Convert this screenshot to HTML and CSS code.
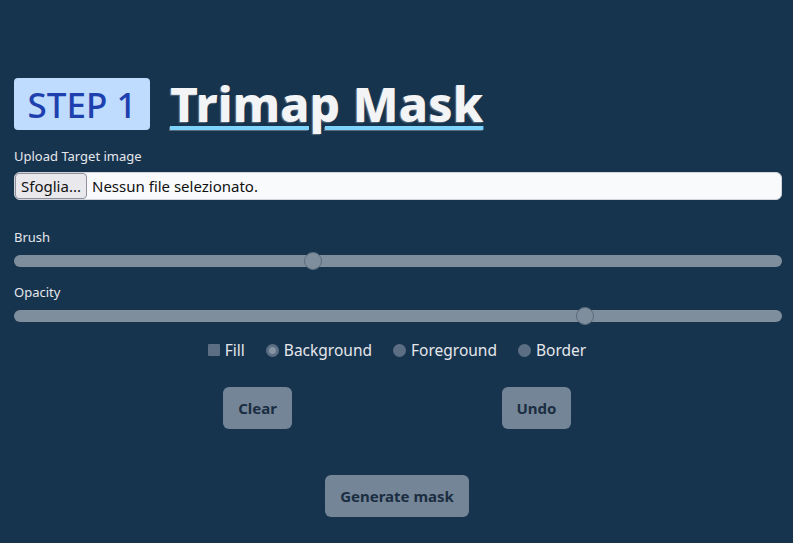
FILE: index.html
```html
<!DOCTYPE html>
<html lang="it">
<head>
<meta charset="utf-8">
<title>Trimap Mask</title>
<link rel="stylesheet" href="styles.css">
</head>
<body>
<main class="page">
  <header class="head">
    <span class="badge">STEP 1</span>
    <h1 class="title">Trimap Mask</h1>
  </header>

  <label class="label label-upload">Upload Target image</label>
  <div class="file">
    <span class="file-btn">Sfoglia...</span>
    <span class="file-text">Nessun file selezionato.</span>
  </div>

  <label class="label label-brush">Brush</label>
  <input class="range" type="range" min="0" max="100" step="any" value="38.7">

  <label class="label label-opacity">Opacity</label>
  <input class="range" type="range" min="0" max="100" step="any" value="74.9">

  <div class="options">
    <label class="opt"><span class="box"></span>Fill</label>
    <label class="opt"><span class="dot dot-on"></span>Background</label>
    <label class="opt"><span class="dot"></span>Foreground</label>
    <label class="opt"><span class="dot"></span>Border</label>
  </div>

  <div class="actions">
    <button class="btn">Clear</button>
    <button class="btn">Undo</button>
  </div>

  <div class="generate">
    <button class="btn">Generate mask</button>
  </div>
</main>
</body>
</html>
```

FILE: styles.css
```css
html, body {
  margin: 0;
  padding: 0;
  background: #17344f;
}
body {
  font-family: "Noto Sans", "Open Sans", sans-serif;
  color: #e5e7eb;
}
.page {
  padding: 78px 11px 0 14px;
  height: 543px;
  box-sizing: border-box;
  display: flex;
  flex-direction: column;
}
.head {
  display: flex;
  align-items: center;
  gap: 20px;
  height: 52px;
}
.badge {
  width: 136px;
  height: 52px;
  box-sizing: border-box;
  background: #bfdbfe;
  color: #1e40af;
  border-radius: 4px;
  font-size: 35px;
  font-weight: 500;
  line-height: 54px;
  text-align: center;
}
.title {
  margin: 0;
  font-size: 48px;
  font-weight: 800;
  letter-spacing: 0.1px;
  color: #f3f4f6;
  line-height: 52px;
  text-decoration: underline;
  text-decoration-color: #7dd3fc;
  text-decoration-thickness: 4px;
  text-underline-offset: 4px;
  text-shadow: -1px 1px 1px rgba(120, 130, 140, 0.7);
}
.label {
  display: block;
  font-size: 13px;
  line-height: 18px;
  color: #e5e7eb;
}
.label-upload { margin-top: 17px; }
.label-brush { margin-top: 28px; }
.label-opacity { margin-top: 13px; }
.file {
  margin-top: 7px;
  height: 28px;
  box-sizing: border-box;
  background: #f8fafc;
  border: 1px solid #d1d5db;
  border-radius: 6px;
  display: flex;
  align-items: center;
  color: #111;
  font-family: "Noto Sans", sans-serif;
  font-size: 15px;
}
.file-btn {
  height: 26px;
  box-sizing: border-box;
  background: #e9e9ed;
  border: 1px solid #8f8f9d;
  border-radius: 4px;
  padding: 0 4px;
  line-height: 24px;
  width: 72px;
  text-align: center;
}
.file-text {
  margin-left: 5px;
}
.range {
  -webkit-appearance: none;
  appearance: none;
  width: 100%;
  height: 18px;
  margin: 0;
  margin-top: 6px;
  background: transparent;
  display: block;
}
.range::-webkit-slider-runnable-track {
  height: 12px;
  border-radius: 6px;
  background: #7f8e9c;
}
.range::-webkit-slider-thumb {
  -webkit-appearance: none;
  appearance: none;
  width: 18px;
  height: 18px;
  margin-top: -3px;
  border-radius: 50%;
  background: #7f8e9c;
  border: 1px solid #5b6b7c;
  box-sizing: border-box;
}
.options {
  margin-top: 15px;
  display: flex;
  justify-content: center;
  gap: 21px;
  font-size: 15.5px;
  line-height: 20px;
  color: #e5e7eb;
  padding-right: 2px;
}
.opt {
  display: flex;
  align-items: center;
  gap: 5px;
}
.box {
  width: 12px;
  height: 12px;
  background: #5c6e83;
  border-radius: 1px;
}
.dot {
  width: 13px;
  height: 13px;
  border-radius: 50%;
  background: #5c6e83;
  box-sizing: border-box;
}
.dot-on {
  background: #8593a3;
  border: 3px solid #5c6e83;
}
.actions {
  margin-top: 27px;
  width: 558px;
  align-self: center;
  display: grid;
  grid-template-columns: 1fr 1fr;
  justify-items: center;
  margin-left: -2px;
}
.btn {
  height: 42px;
  border: none;
  border-radius: 6px;
  background: #738596;
  color: #1b2d42;
  font-family: "Noto Sans", sans-serif;
  font-weight: 700;
  font-size: 15px;
  padding: 0 15px;
}
.generate {
  margin-top: 46px;
  display: flex;
  justify-content: center;
  margin-left: -2px;
}
```
